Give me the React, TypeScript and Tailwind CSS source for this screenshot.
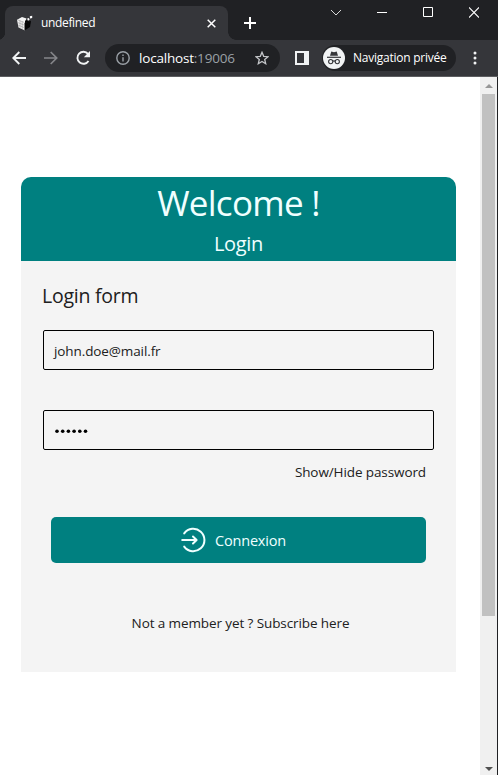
import type { ReactNode } from 'react';

function Favicon() {
  return (
    <svg className="ml-[12px] h-[16px] w-[16px] shrink-0" viewBox="0 0 16 16">
      <path d="M0 4.8 5 2 9.5 3.6 8 7V15.5L1.5 12.5Z" fill="#f4f4f4" />
      <path d="M7.5 8 14 6 13 12 7.5 15.5Z" fill="#050505" />
      <path d="M8 5.8 10.5 5 14 6 8 8Z" fill="#050505" />
      <path d="M10.2 3.6 12 3 12.6 5 10.8 5.8ZM12.8 1.2l2.4-.5v2.3l-2.2.5Z" fill="#fff" />
      <path d="M.6 7.5 7.5 10.2M1 10 7.5 12.8M3 5.5v7.4M5.2 6.4V14M.5 4.8l7 2.7" stroke="#8d8d8d" strokeWidth=".5" fill="none" />
    </svg>
  );
}

function Tab() {
  return (
    <div className="relative mt-[6px] ml-[5px] flex h-[34px] w-[223px] items-center rounded-t-[8px] bg-[#35363a]">
      <div className="absolute -left-[5px] bottom-0 h-[8px] w-[5px] bg-[radial-gradient(circle_at_-3px_0,#202124_8px,#35363a_8.5px)]" />
      <div className="absolute -right-[8px] bottom-0 h-[8px] w-[8px] bg-[radial-gradient(circle_at_8px_0,#202124_7.5px,#35363a_8px)]" />
      <Favicon />
      <span className="ml-[8px] text-[12px] tracking-[-0.35px] text-white">undefined</span>
      <svg className="mr-[12px] ml-auto h-[9px] w-[9px]" viewBox="0 0 9 9" stroke="#fff" strokeWidth="1.5">
        <path d="M.7.7 8.3 8.3M8.3.7.7 8.3" />
      </svg>
    </div>
  );
}

function TitleBar() {
  return (
    <div className="flex h-[40px] bg-[#202124]">
      <Tab />
      <svg className="mt-[17px] ml-[16px] h-[12px] w-[12px]" viewBox="0 0 12 12" stroke="#fff" strokeWidth="2">
        <path d="M6 0v12M0 6h12" />
      </svg>
      <div className="mt-[7px] mr-[19px] ml-auto flex h-[11px] items-center gap-[36px]">
        <svg className="h-[11px] w-[10px]" viewBox="0 0 10 11" fill="none" stroke="#d8d8d8">
          <path d="M0 3 5 8l5-5" />
        </svg>
        <svg className="h-[11px] w-[10px]" viewBox="0 0 10 11" stroke="#fff">
          <path d="M0 5.5h10" />
        </svg>
        <svg className="h-[11px] w-[10px]" viewBox="0 0 10 11" fill="none" stroke="#fff">
          <path d="M.5.5h9v9h-9z" />
        </svg>
        <svg className="h-[11px] w-[10px]" viewBox="0 0 10 11" stroke="#fff" strokeWidth="1.1">
          <path d="m0 .5 10 10M10 .5l-10 10" />
        </svg>
      </div>
    </div>
  );
}

function IncognitoBadge() {
  return (
    <svg className="h-[22px] w-[22px] shrink-0" viewBox="0 0 22 22">
      <circle cx="11" cy="11" r="11" fill="#f1f3f4" />
      <path d="M7 8.7 8.3 4.5l2.7.7 2.7-.7L15 8.7Z" fill="#35363a" />
      <path d="M4 10.3h14" stroke="#35363a" strokeWidth="1.2" />
      <g fill="none" stroke="#35363a" strokeWidth="1.1">
        <circle cx="7.7" cy="14.6" r="2.1" />
        <circle cx="14.3" cy="14.6" r="2.1" />
        <path d="M9.8 14.3q1.2-.8 2.4 0" />
      </g>
    </svg>
  );
}

function Toolbar() {
  return (
    <div className="flex h-[37px] items-center border-b border-[#5c5d60] bg-[#35363a]">
      <svg className="ml-[12px] h-[14px] w-[14px]" viewBox="0 0 14 14" fill="none" stroke="#f1f3f4" strokeWidth="1.9">
        <path d="M14 7H1.5M7.3 1 1.3 7l6 6" />
      </svg>
      <svg className="ml-[18px] h-[14px] w-[14px]" viewBox="0 0 14 14" fill="none" stroke="#85868a" strokeWidth="1.7">
        <path d="M0 7h12.5M6.7 1l6 6-6 6" />
      </svg>
      <svg className="ml-[18px] h-[16px] w-[15px]" viewBox="0 0 15 16">
        <path d="M12.5 11a6 6 0 1 1-.5-7.1" fill="none" stroke="#f1f3f4" strokeWidth="1.9" />
        <path d="M14 1v6.2H7.8Z" fill="#f1f3f4" />
      </svg>
      <div className="ml-[14px] flex h-[28px] w-[175px] items-center rounded-full bg-[#202124]">
        <svg className="ml-[11px] h-[14px] w-[14px]" viewBox="0 0 14 14" fill="none" stroke="#9aa0a6" strokeWidth="1.4">
          <circle cx="7" cy="7" r="6.2" />
          <path d="M7 6.2v4.2M7 3.4v1.5" />
        </svg>
        <span className="ml-[9px] text-[13.5px] tracking-[-0.2px] text-white">
          localhost<span className="text-[#9aa0a6]">:19006</span>
        </span>
        <svg className="mr-[11px] ml-auto h-[14px] w-[14px]" viewBox="0 0 14 14" fill="none" stroke="#c5c7ca" strokeWidth="1.3">
          <path d="m7 1.3 1.7 4 4.3.4-3.3 2.8 1 4.2L7 10.5l-3.7 2.2 1-4.2L1 5.7l4.3-.4Z" />
        </svg>
      </div>
      <svg className="ml-[15px] h-[14px] w-[14px]" viewBox="0 0 14 14">
        <path d="M0 0h14v14H0Z" fill="#f1f3f4" />
        <path d="M2 2h7v10H2Z" fill="#35363a" />
      </svg>
      <div className="ml-[13px] flex h-[26px] w-[134px] items-center rounded-full bg-[#202124] pl-px">
        <IncognitoBadge />
        <span className="ml-[8px] text-[12px] tracking-[-0.25px] whitespace-nowrap text-white">Navigation privée</span>
      </div>
      <svg className="ml-[17px] h-[14px] w-[4px]" viewBox="0 0 4 14" fill="#f1f3f4">
        <circle cx="2" cy="2" r="1.5" />
        <circle cx="2" cy="7" r="1.5" />
        <circle cx="2" cy="12" r="1.5" />
      </svg>
    </div>
  );
}

function Field({ children }: { children: ReactNode }) {
  return (
    <div className="mx-[22px] flex h-[40px] items-center rounded-[2px] border border-black pl-[10px] text-[13.5px]">
      {children}
    </div>
  );
}

function LoginCard() {
  return (
    <div className="mt-[100px] ml-[21px] h-[495px] w-[435px] overflow-hidden rounded-t-[10px] bg-[#f4f4f4] text-[#202020]">
      <div className="flex h-[84px] flex-col items-center bg-[#008080] text-[#f0ffff]">
        <h1 className="mt-[2px] text-[35px] leading-[48px] tracking-[-0.7px]">Welcome !</h1>
        <h2 className="mt-[3px] text-[20px] leading-[27px] tracking-[-0.3px]">Login</h2>
      </div>
      <h3 className="mt-[21px] ml-[21px] h-[48px] text-[19.5px] leading-[28px] tracking-[-0.25px]">Login form</h3>
      <Field>
        <span className="pt-[2px] tracking-[-0.1px]">john.doe@mail.fr</span>
      </Field>
      <div className="h-[40px]" />
      <Field>
        <svg className="h-[6px] w-[36px]" viewBox="0 0 36 6">
          {[3, 8.7, 14.4, 20.1, 25.8, 31.5].map((x) => (
            <circle key={x} cx={x} cy="4.2" r="1.8" />
          ))}
        </svg>
      </Field>
      <div className="mt-[12px] mr-[30px] h-[20px] text-right text-[13.5px] leading-[20px] tracking-[-0.1px]">
        Show/Hide password
      </div>
      <div className="mx-[30px] mt-[35px] flex h-[46px] items-center justify-center rounded-[5px] bg-[#008080] pr-[10px] text-[#f0ffff]">
        <svg className="h-[26px] w-[26px]" viewBox="0 0 26 26" fill="none" stroke="#f0ffff" strokeWidth="2" strokeLinecap="round" strokeLinejoin="round">
          <path d="M3.2 6.4a11.2 11.2 0 1 1 0 13.2" />
          <path d="M1.2 13h14M12 9.5l3.6 3.5-3.6 3.5" />
        </svg>
        <span className="ml-[8px] pt-[2px] text-[14.5px] tracking-[-0.2px]">Connexion</span>
      </div>
      <p className="mt-[50px] pl-[4px] text-center text-[13.5px] leading-[20px] tracking-[-0.1px]">
        Not a member yet ? Subscribe here
      </p>
    </div>
  );
}

function Scrollbar() {
  return (
    <div className="flex w-[17px] flex-col items-center bg-[#f0f0f0]">
      <svg className="mt-[7px] h-[4px] w-[8px]" viewBox="0 0 8 4">
        <path d="M0 4 4 0l4 4Z" fill="#969696" />
      </svg>
      <div className="mt-[6px] h-[522px] w-[13px] bg-[#c1c1c1]" />
      <svg className="mt-auto mb-[4px] h-[4px] w-[8px]" viewBox="0 0 8 4">
        <path d="M0 0h8L4 4Z" fill="#505050" />
      </svg>
    </div>
  );
}

export default function App() {
  return (
    <div className="flex h-[775px] w-[498px] flex-col overflow-hidden bg-white font-['Open_Sans','Noto_Sans',sans-serif]">
      <TitleBar />
      <Toolbar />
      <div className="flex flex-1 border-r border-[#202124]">
        <main className="flex-1">
          <LoginCard />
        </main>
        <Scrollbar />
      </div>
    </div>
  );
}
